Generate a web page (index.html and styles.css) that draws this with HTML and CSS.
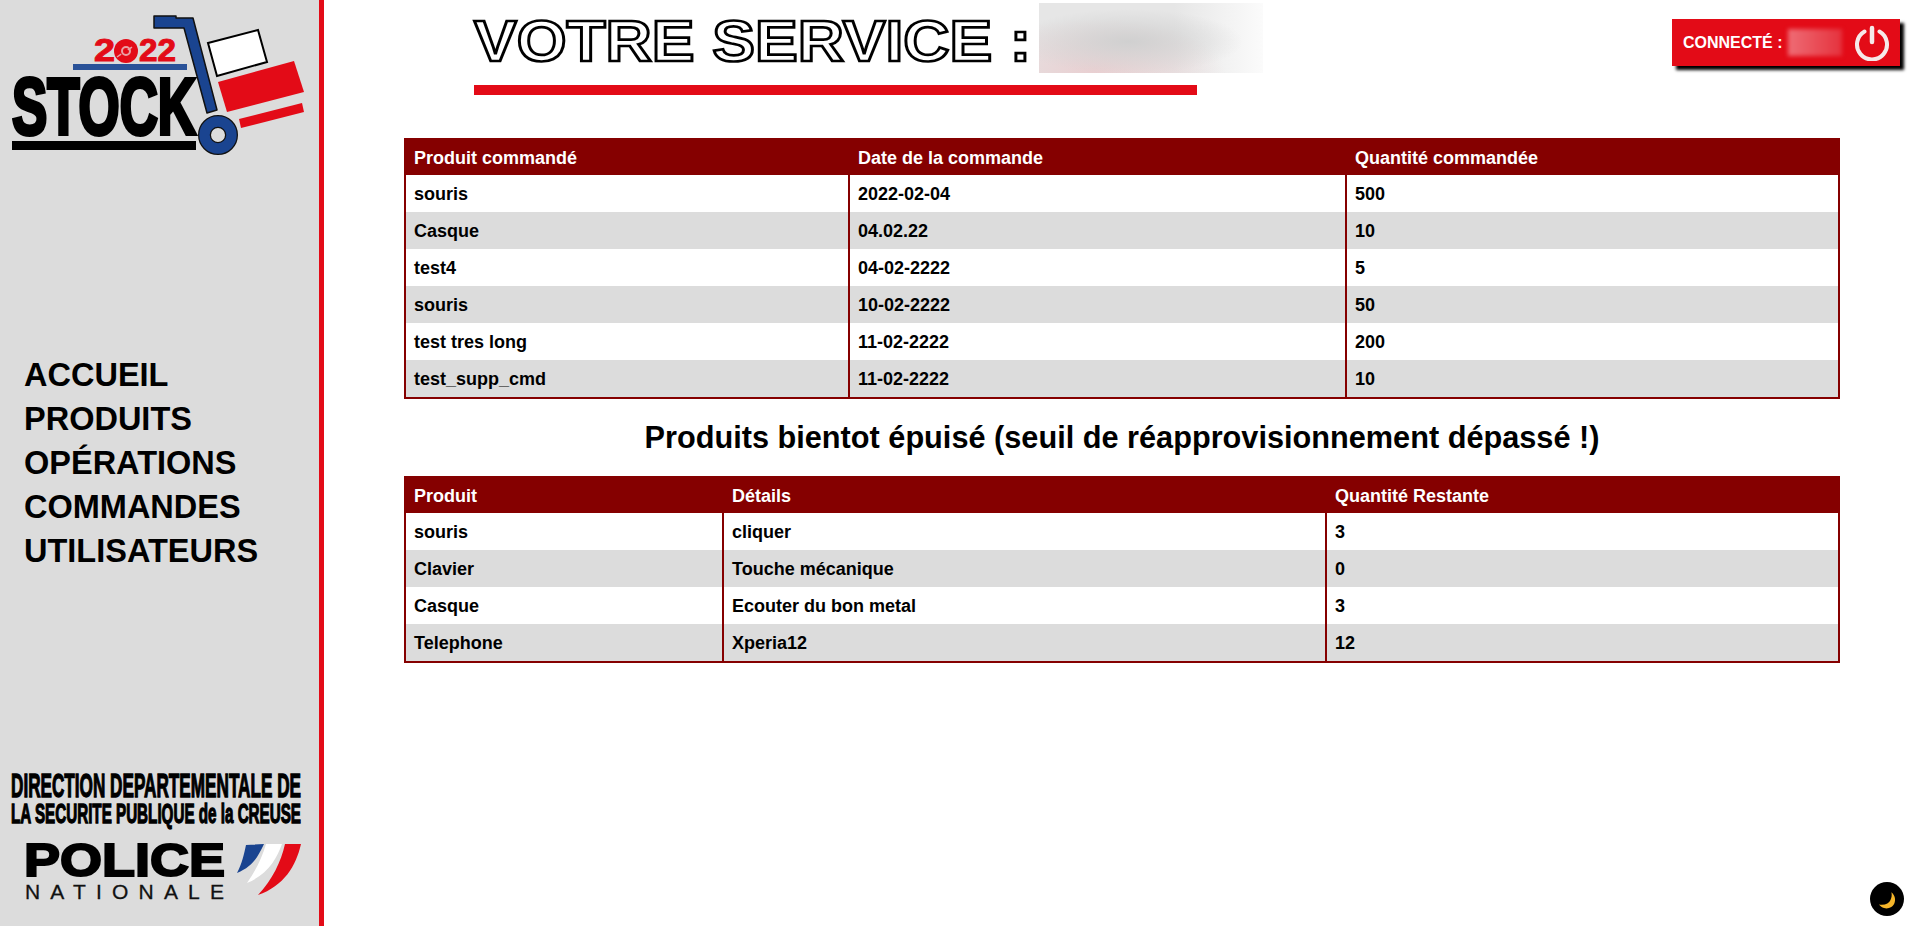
FILE: index.html
```html
<!DOCTYPE html>
<html lang="fr">
<head>
    <meta charset="UTF-8">
    <meta name="viewport" content="width=device-width, initial-scale=1.0">
    <title>Stock 2022</title>
    <link rel="stylesheet" href="styles.css">
</head>
<body>

<aside class="sidebar">
    <svg class="logo" viewBox="0 0 319 170" width="319" height="170">
        <!-- chariot -->
        <polygon points="208,43 258,30 267,62 217,76" fill="#fff" stroke="#000" stroke-width="2"/>
        <polygon points="218,82 294,61 304,92 227,112" fill="#e30b17"/>
        <polygon points="239,119 302,103 304,112 241,128" fill="#e30b17"/>
        <polygon points="154,16 176,16 176,18 193,18 217,110 207,113 184,28 176,28 154,28" fill="#1a4490" stroke="#111" stroke-width="1.5" stroke-linejoin="round"/>
        <circle cx="218" cy="135" r="13.5" fill="#dcdcdc" stroke="#111" stroke-width="13"/>
        <circle cx="218" cy="135" r="13.5" fill="none" stroke="#1a4490" stroke-width="10.5"/>
        <!-- texte -->
        <text class="logo-year" x="94" y="61" textLength="21" lengthAdjust="spacingAndGlyphs">2</text>
        <circle cx="126" cy="51" r="12" fill="#e30b17"/>
        <circle cx="126" cy="51" r="4" fill="none" stroke="#e9a0a4" stroke-width="2"/>
        <line x1="117" y1="57" x2="135" y2="45" stroke="#e9a0a4" stroke-width="1.5" stroke-dasharray="5 8"/>
        <text class="logo-year" x="139" y="61" textLength="37" lengthAdjust="spacingAndGlyphs">22</text>
        <rect x="73" y="64" width="114" height="6" fill="#2a5298"/>
        <text class="logo-stock" x="12" y="134" textLength="184" lengthAdjust="spacingAndGlyphs">STOCK</text>
        <rect x="12" y="141" width="184" height="9" fill="#000"/>
    </svg>

    <nav class="menu">
        <a href="#">ACCUEIL</a>
        <a href="#">PRODUITS</a>
        <a href="#">OPÉRATIONS</a>
        <a href="#">COMMANDES</a>
        <a href="#">UTILISATEURS</a>
    </nav>

    <svg class="logo-police" viewBox="0 0 319 176" width="319" height="176">
        <text class="dir-text" transform="translate(11 47) scale(.54 1)" textLength="537" lengthAdjust="spacingAndGlyphs">DIRECTION DEPARTEMENTALE DE</text>
        <text class="dir-text dir-small" transform="translate(11 73) scale(.54 1)" textLength="537" lengthAdjust="spacingAndGlyphs">LA SECURITE PUBLIQUE de la CREUSE</text>
        <text class="police-text" x="24" y="126" textLength="201" lengthAdjust="spacingAndGlyphs">POLICE</text>
        <text class="nationale-text" x="25" y="149" textLength="199">NATIONALE</text>
        <path d="M246 95 L264 94 C258 106 254 116 237 123 C242 114 244 104 246 95Z" fill="#1a4490"/>
        <path d="M266 94 L282 94 C276 110 268 124 247 133 C256 120 262 108 266 94Z" fill="#fff"/>
        <path d="M285 94 L301 94 C296 116 284 136 258 145 C272 130 281 112 285 94Z" fill="#e30b17"/>
    </svg>
</aside>

<main class="content">
    <header class="top">
        <div class="title-block">
            <h1 class="title"><span class="title-text">VOTRE SERVICE :</span><span class="blur-service"></span></h1>
            <div class="title-bar"></div>
        </div>
        <div class="user-box">
            <span class="user-label">CONNECTÉ :</span>
            <span class="blur-user"></span>
            <svg class="power" viewBox="0 0 36 36" width="36" height="36">
                <path d="M10.5 6.5 A15 15 0 1 0 25.5 6.5" fill="none" stroke="#f6e9e9" stroke-width="4" stroke-linecap="round"/>
                <line x1="18" y1="3" x2="18" y2="17" stroke="#f6e9e9" stroke-width="4.5" stroke-linecap="round"/>
            </svg>
        </div>
    </header>

    <table class="data-table table-cmd">
        <tr>
            <th>Produit commandé</th>
            <th>Date de la commande</th>
            <th>Quantité commandée</th>
        </tr>
        <tr><td>souris</td><td>2022-02-04</td><td>500</td></tr>
        <tr><td>Casque</td><td>04.02.22</td><td>10</td></tr>
        <tr><td>test4</td><td>04-02-2222</td><td>5</td></tr>
        <tr><td>souris</td><td>10-02-2222</td><td>50</td></tr>
        <tr><td>test tres long</td><td>11-02-2222</td><td>200</td></tr>
        <tr><td>test_supp_cmd</td><td>11-02-2222</td><td>10</td></tr>
    </table>

    <h2 class="section-title">Produits bientot épuisé (seuil de réapprovisionnement dépassé !)</h2>

    <table class="data-table table-seuil">
        <tr>
            <th>Produit</th>
            <th>Détails</th>
            <th>Quantité Restante</th>
        </tr>
        <tr><td>souris</td><td>cliquer</td><td>3</td></tr>
        <tr><td>Clavier</td><td>Touche mécanique</td><td>0</td></tr>
        <tr><td>Casque</td><td>Ecouter du bon metal</td><td>3</td></tr>
        <tr><td>Telephone</td><td>Xperia12</td><td>12</td></tr>
    </table>
</main>

<button class="dark-toggle" aria-label="Mode sombre">
    <svg viewBox="0 0 24 24" width="24" height="24">
        <path d="M16.4 5.3 C19.5 8 21 12 19.5 16 C18 20 13 22.5 9 21 C7 20.5 5.5 19.5 4 17.6 C10 18.5 14 16.5 15.5 13 C16.7 10.5 17 8 16.4 5.3Z" fill="#f5b52a"/>
    </svg>
</button>

</body>
</html>
```

FILE: styles.css
```css
* {
    box-sizing: border-box;
}
html, body {
    height: 100%;
}
body {
    margin: 0;
    display: flex;
    height: 926px;
    overflow: hidden;
    background-color: #fff;
    color: #000;
    font-family: "Liberation Sans", Arial, sans-serif;
}

/* menu de gauche */
.sidebar {
    width: 324px;
    flex-shrink: 0;
    background-color: #dcdcdc;
    border-right: 5px solid #e30b17;
    display: flex;
    flex-direction: column;
    justify-content: space-between;
}
.logo, .logo-police {
    display: block;
}
.logo-year {
    font-size: 32px;
    font-weight: bold;
    fill: #e30b17;
    stroke: #e30b17;
    stroke-width: 1;
}
.logo-stock {
    font-size: 79px;
    font-weight: bold;
    fill: #000;
    stroke: #000;
    stroke-width: 4;
}
.dir-text {
    font-size: 33px;
    font-weight: bold;
    fill: #000;
    stroke: #000;
    stroke-width: 1.3;
}
.dir-small {
    font-size: 27.5px;
}
.police-text {
    font-size: 46px;
    font-weight: bold;
    fill: #000;
    stroke: #000;
    stroke-width: 2;
}
.nationale-text {
    font-size: 21px;
    fill: #111;
    stroke: #111;
    stroke-width: .3;
}
.menu {
    display: flex;
    flex-direction: column;
    padding-top: 5px;
    padding-left: 24px;
}
.menu a {
    font-size: 32.5px;
    font-weight: bold;
    line-height: 44px;
    color: #000;
    text-decoration: none;
}

/* contenu */
.content {
    flex: 1;
    min-width: 0;
    padding: 0 78px 0 80px;
}
.top {
    display: flex;
    justify-content: space-between;
    align-items: flex-start;
    height: 138px;
    padding-left: 70px;
}
.title-block {
    width: 723px;
}
.title {
    display: flex;
    align-items: center;
    gap: 8px;
    height: 82px;
    margin: 0 0 3px;
    font-size: 64px;
    font-weight: bold;
    white-space: nowrap;
    color: #fff;
    -webkit-text-stroke: 3px #000;
}
/* lettres plus larges que hautes */
.title-text {
    display: inline-block;
    transform: scaleY(.9);
}
.blur-service {
    flex-shrink: 0;
    width: 224px;
    height: 70px;
    margin-top: -6px;
    background:
        radial-gradient(ellipse at 40% 55%, #d0d0d0 0%, rgba(220, 220, 220, 0) 60%),
        radial-gradient(ellipse at 25% 100%, #e9cfd1 0%, rgba(233, 207, 209, 0) 55%),
        linear-gradient(to right, #e6e6e6 60%, #fbfbfb 100%);
}
.title-bar {
    height: 10px;
    background-color: #e30b17;
}
.user-box {
    display: flex;
    align-items: center;
    width: 228px;
    height: 47px;
    margin-top: 19px;
    margin-right: -60px;
    padding-left: 11px;
    background-color: #e30b17;
    box-shadow: 4px 4px 3px #000;
    color: #fff;
    font-size: 16px;
    font-weight: bold;
}
.blur-user {
    width: 54px;
    height: 27px;
    margin-left: 5px;
    background: linear-gradient(to right, #ee6c75, #e5323d);
    filter: blur(2px);
}
.power {
    margin-left: 12px;
}

/* tableaux */
.data-table {
    width: 100%;
    border-collapse: separate;
    border-spacing: 0;
    table-layout: fixed;
    border: 2px solid #850000;
    font-size: 18px;
    font-weight: bold;
}
.data-table th {
    height: 35px;
    padding: 1px 8px 0;
    background-color: #850000;
    color: #fff;
    text-align: left;
}
.data-table td {
    height: 37px;
    padding: 2px 8px 0;
}
.data-table th + th, .data-table td + td {
    border-left: 2px solid #850000;
}
.data-table tr:nth-child(odd) td {
    background-color: #dcdcdc;
}
.table-cmd th:nth-child(1) {
    width: 442px;
}
.table-cmd th:nth-child(2) {
    width: 497px;
}
.table-seuil th:nth-child(1) {
    width: 316px;
}
.table-seuil th:nth-child(2) {
    width: 603px;
}
.section-title {
    margin: 0;
    height: 77px;
    font-size: 30.7px;
    line-height: 77px;
    text-align: center;
}

.dark-toggle {
    position: fixed;
    right: 14px;
    bottom: 10px;
    width: 34px;
    height: 34px;
    padding: 0;
    display: flex;
    align-items: center;
    justify-content: center;
    background-color: #000;
    border: none;
    border-radius: 50%;
}
```
